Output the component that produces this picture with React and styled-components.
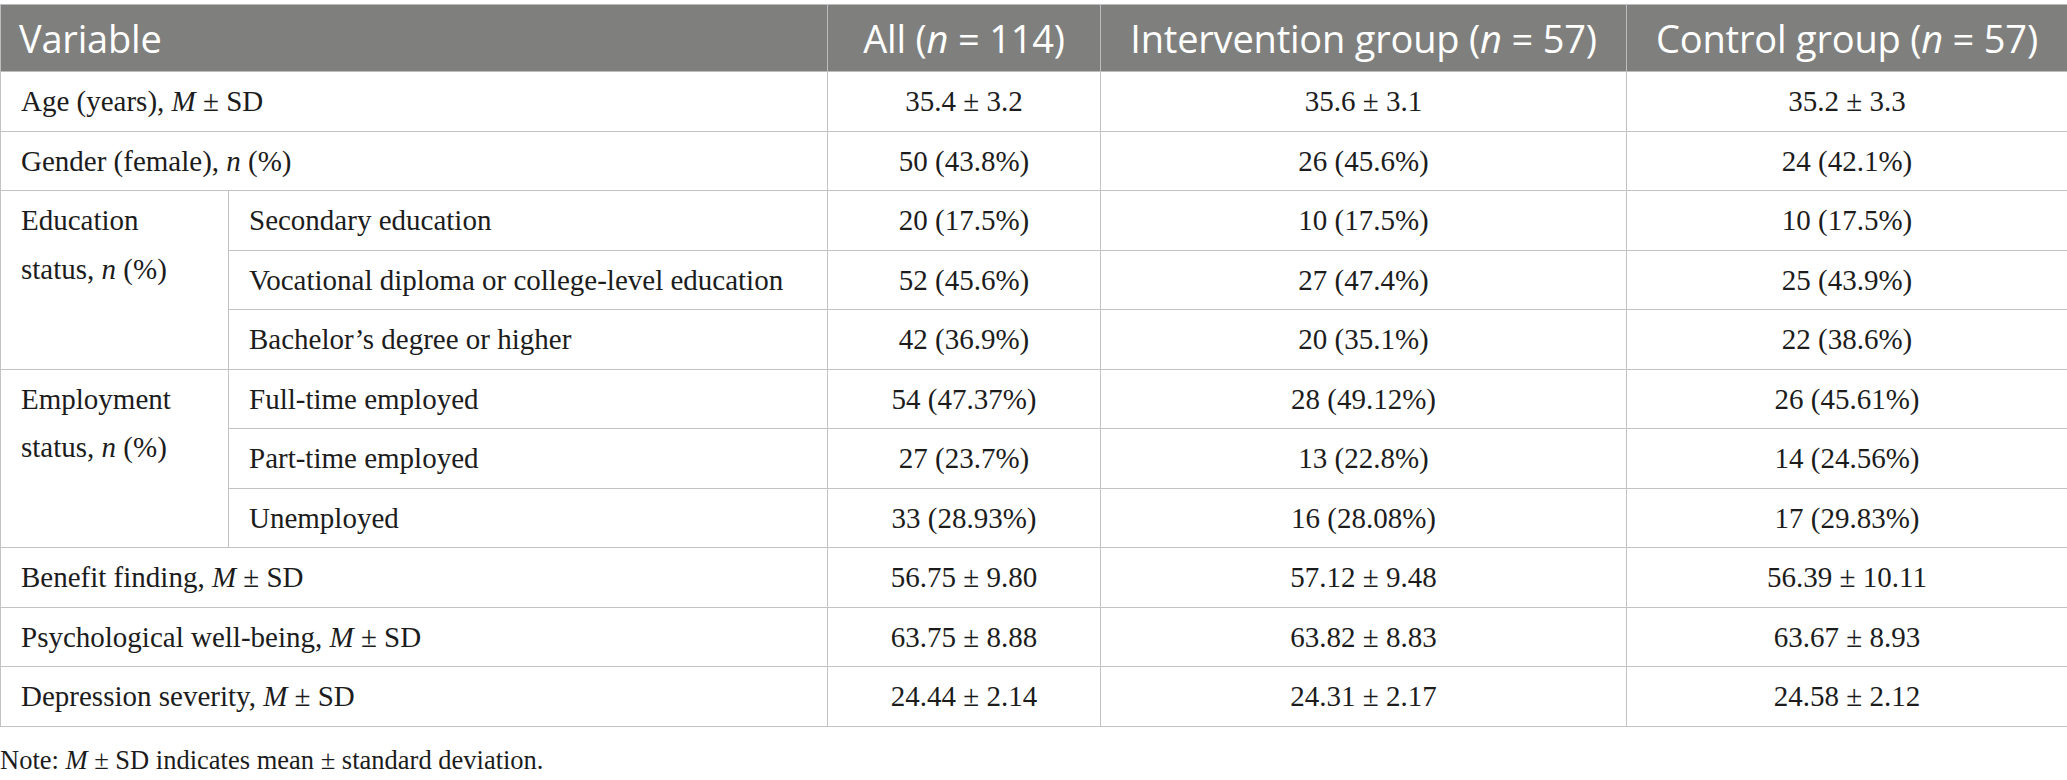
import styled, { createGlobalStyle } from "styled-components";

const GlobalStyle = createGlobalStyle`
  html, body {
    margin: 0;
    padding: 0;
    background: #fff;
  }
`;

const Page = styled.div`
  padding-top: 4px;
  width: 2067px;
  font-family: "Liberation Serif", "Times New Roman", serif;
  color: #1c1c1c;
`;

const Table = styled.table`
  width: 2067px;
  border-collapse: collapse;
  table-layout: fixed;
`;

const HeadCell = styled.th`
  background: #7f807e;
  color: #fff;
  font-family: "Open Sans", "Noto Sans", sans-serif;
  font-weight: 400;
  font-size: 38px;
  letter-spacing: -0.2px;
  height: 66px;
  padding: 0 18px;
  border: 1px solid #bdbdbd;
  text-align: ${(p) => (p.left ? "left" : "center")};
  white-space: nowrap;
`;

const Cell = styled.td`
  border: 1px solid #c3c3c3;
  font-size: 29px;
  line-height: 48.5px;
  padding: 5px 20px;
  vertical-align: ${(p) => (p.top ? "top" : "middle")};
  text-align: ${(p) => (p.center ? "center" : "left")};
  white-space: nowrap;
`;

const Note = styled.p`
  margin: 13px 0 0;
  font-size: 26.5px;
  line-height: 40px;
`;

const M = () => <i>M</i>;
const N = () => <i>n</i>;

const groups = [
  {
    label: "Education",
    sub: ["Secondary education", "Vocational diploma or college-level education", "Bachelor’s degree or higher"],
    values: [
      ["20 (17.5%)", "10 (17.5%)", "10 (17.5%)"],
      ["52 (45.6%)", "27 (47.4%)", "25 (43.9%)"],
      ["42 (36.9%)", "20 (35.1%)", "22 (38.6%)"],
    ],
  },
  {
    label: "Employment",
    sub: ["Full-time employed", "Part-time employed", "Unemployed"],
    values: [
      ["54 (47.37%)", "28 (49.12%)", "26 (45.61%)"],
      ["27 (23.7%)", "13 (22.8%)", "14 (24.56%)"],
      ["33 (28.93%)", "16 (28.08%)", "17 (29.83%)"],
    ],
  },
];

const meanRows = [
  ["Benefit finding", ["56.75 ± 9.80", "57.12 ± 9.48", "56.39 ± 10.11"]],
  ["Psychological well-being", ["63.75 ± 8.88", "63.82 ± 8.83", "63.67 ± 8.93"]],
  ["Depression severity", ["24.44 ± 2.14", "24.31 ± 2.17", "24.58 ± 2.12"]],
];

function ValueCells({ values }) {
  return values.map((v, i) => (
    <Cell key={i} center>
      {v}
    </Cell>
  ));
}

export default function App() {
  return (
    <Page>
      <GlobalStyle />
      <Table>
        <colgroup>
          <col style={{ width: 228 }} />
          <col style={{ width: 599 }} />
          <col style={{ width: 273 }} />
          <col style={{ width: 526 }} />
          <col style={{ width: 441 }} />
        </colgroup>
        <thead>
          <tr>
            <HeadCell colSpan={2} left>
              Variable
            </HeadCell>
            <HeadCell>
              All (<N /> = 114)
            </HeadCell>
            <HeadCell>
              Intervention group (<N /> = 57)
            </HeadCell>
            <HeadCell>
              Control group (<N /> = 57)
            </HeadCell>
          </tr>
        </thead>
        <tbody>
          <tr>
            <Cell colSpan={2}>
              Age (years), <M /> ± SD
            </Cell>
            <ValueCells values={["35.4 ± 3.2", "35.6 ± 3.1", "35.2 ± 3.3"]} />
          </tr>
          <tr>
            <Cell colSpan={2}>
              Gender (female), <N /> (%)
            </Cell>
            <ValueCells values={["50 (43.8%)", "26 (45.6%)", "24 (42.1%)"]} />
          </tr>
          {groups.map((g) =>
            g.sub.map((s, i) => (
              <tr key={g.label + i}>
                {i === 0 && (
                  <Cell rowSpan={3} top>
                    {g.label}
                    <br />
                    status, <N /> (%)
                  </Cell>
                )}
                <Cell>{s}</Cell>
                <ValueCells values={g.values[i]} />
              </tr>
            ))
          )}
          {meanRows.map(([label, values]) => (
            <tr key={label}>
              <Cell colSpan={2}>
                {label}, <M /> ± SD
              </Cell>
              <ValueCells values={values} />
            </tr>
          ))}
        </tbody>
      </Table>
      <Note>
        Note: <M /> ± SD indicates mean ± standard deviation.
      </Note>
    </Page>
  );
}
